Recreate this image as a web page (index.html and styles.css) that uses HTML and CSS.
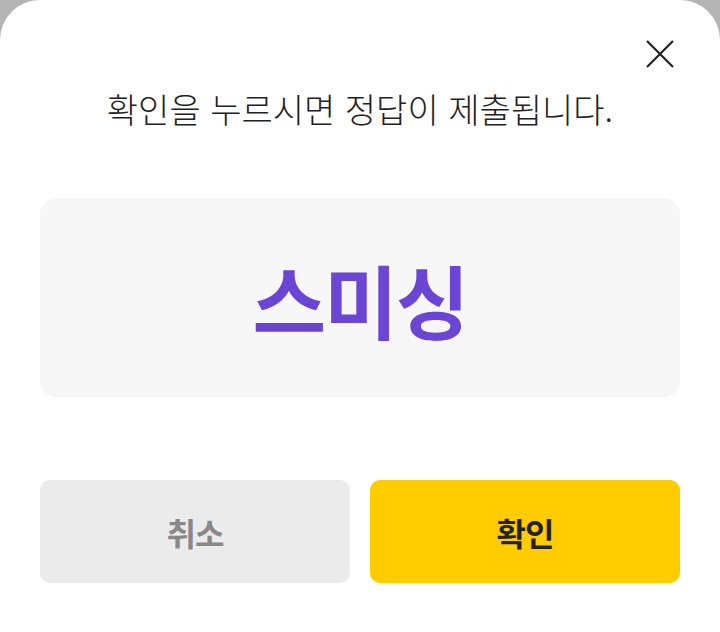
FILE: index.html
```html
<!DOCTYPE html>
<html lang="ko">
<head>
<meta charset="utf-8">
<link rel="stylesheet" href="styles.css">
</head>
<body>
<div class="sheet">
  <button class="close" aria-label="닫기">
    <svg width="30" height="30" viewBox="0 0 30 30"><path d="M2 2 L28 28 M28 2 L2 28" stroke="#222" stroke-width="2.2" fill="none"/></svg>
  </button>
  <p class="title">확인을 누르시면 정답이 제출됩니다.</p>
  <div class="answer"><span>스미싱</span></div>
  <div class="actions">
    <button class="btn cancel">취소</button>
    <button class="btn ok">확인</button>
  </div>
</div>
</body>
</html>
```
FILE: styles.css
```css
html, body {
  margin: 0;
  padding: 0;
  background: #b5b5b5;
  height: 100%;
}
body {
  font-family: "Noto Sans CJK KR", "Noto Sans", sans-serif;
}
.sheet {
  position: relative;
  background: #fff;
  border-radius: 40px 40px 0 0;
  height: 632px;
  box-sizing: border-box;
  padding: 86px 40px 0;
}
.close {
  position: absolute;
  top: 39px;
  right: 45px;
  width: 30px;
  height: 30px;
  padding: 0;
  border: 0;
  background: none;
  display: flex;
}
.title {
  margin: 0;
  text-align: center;
  font-size: 34px;
  line-height: 46px;
  color: #222;
  font-weight: 300;
  letter-spacing: 0;
}
.answer {
  margin-top: 66px;
  height: 199px;
  background: #f7f7f8;
  border-radius: 16px;
  display: flex;
  align-items: center;
  justify-content: center;
}
.answer span {
  font-size: 80px;
  font-weight: 700;
  color: #6b45d3;
  letter-spacing: -2px;
}
.actions {
  margin-top: 83px;
  display: grid;
  grid-template-columns: 1fr 1fr;
  gap: 20px;
}
.btn {
  height: 103px;
  border: 0;
  border-radius: 10px;
  font-family: inherit;
  font-size: 32px;
  font-weight: 700;
  letter-spacing: -1px;
}
.cancel {
  background: #ebebeb;
  color: #888;
}
.ok {
  background: #ffcc00;
  color: #222;
}
```
